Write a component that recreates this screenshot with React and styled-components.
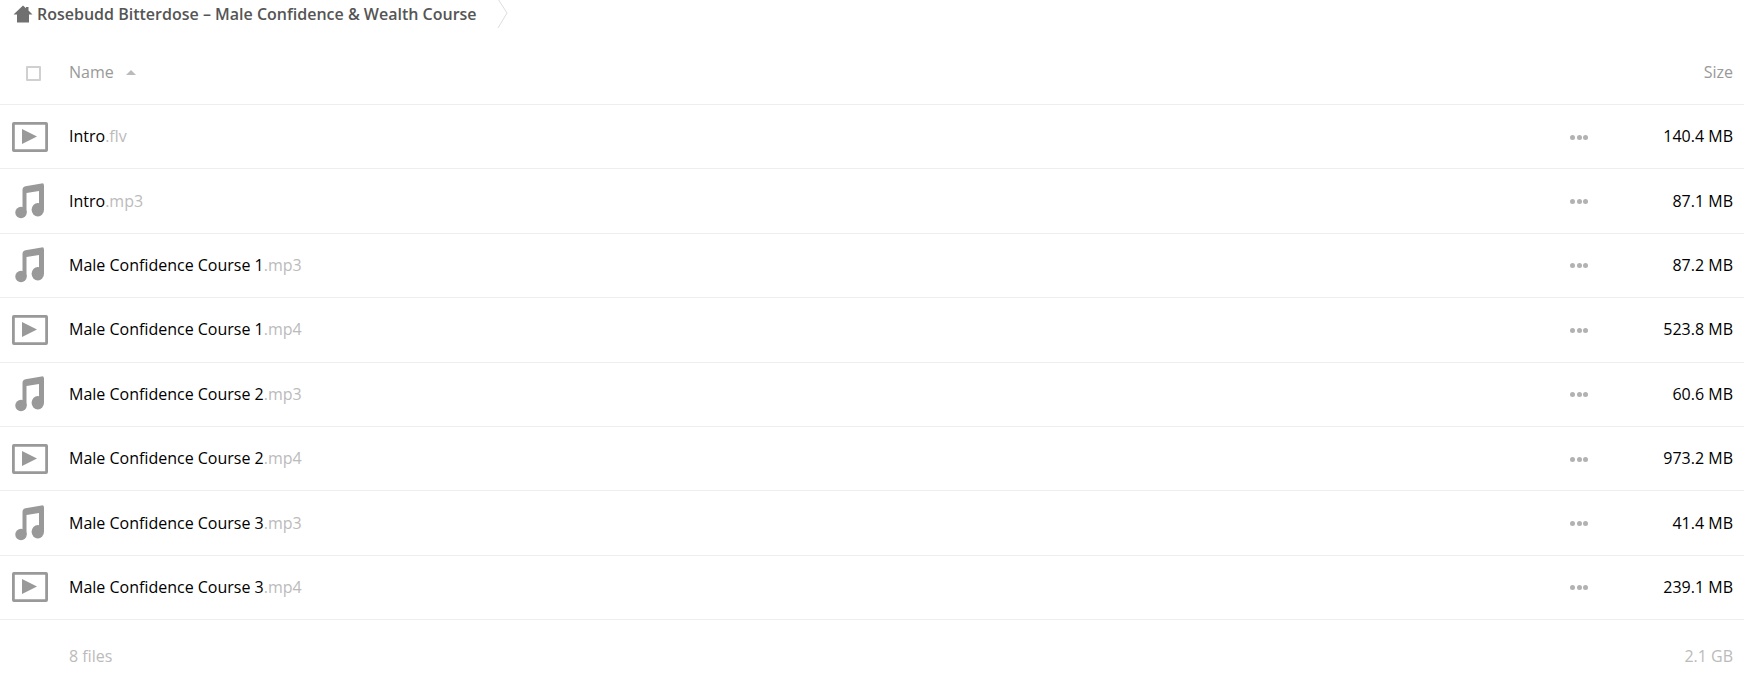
import React from 'react'
import styled, { createGlobalStyle } from 'styled-components'

const GlobalStyle = createGlobalStyle`
  html, body {
    margin: 0;
    padding: 0;
    background: #fff;
    font-family: "Open Sans", "Liberation Sans", sans-serif;
    font-size: 16px;
    color: #000;
    overflow: hidden;
  }
`

const Breadcrumb = styled.div`
  display: flex;
  align-items: center;
  height: 28px;
  padding-left: 13px;
  color: #555;
  font-weight: 600;
  svg { flex: none; }
`

const CrumbName = styled.span`
  margin-left: 4px;
`

const CrumbArrow = styled.svg`
  margin-left: 20px;
  margin-top: -1px;
`

const Row = styled.div`
  display: flex;
  align-items: center;
  height: ${p => p.$height}px;
  box-sizing: border-box;
  border-bottom: ${p => (p.$plain ? 'none' : '1px solid #eee')};
`

const HeadRow = styled(Row)`
  padding-top: 12px;
`

const IconCell = styled.div`
  width: 69px;
  flex: none;
  display: flex;
  padding-left: 12px;
  box-sizing: border-box;
`

const Check = styled.span`
  display: block;
  width: 15px;
  height: 15px;
  box-sizing: border-box;
  margin: 2px 0 0 14px;
  border: 2px solid #d0d0d0;
  border-radius: 1px;
`

const NameCell = styled.div`
  flex: 1;
  min-width: 0;
  white-space: nowrap;
  margin-top: -1px;
`

const HeadLabel = styled.span`
  color: #999;
`

const SortArrow = styled.span`
  display: inline-block;
  margin-left: 12px;
  vertical-align: 3px;
  border-left: 5px solid transparent;
  border-right: 5px solid transparent;
  border-bottom: 5px solid #bbb;
`

const Ext = styled.span`
  color: #bbb;
`

const Dots = styled.div`
  display: flex;
  gap: 1.500px;
  margin-top: 1px;
  margin-right: 55px;
  span {
    width: 5px;
    height: 5px;
    border-radius: 50%;
    background: #b2b2b2;
  }
`

const SizeCell = styled.div`
  width: 90px;
  flex: none;
  text-align: right;
  margin-top: -1px;
  margin-right: 11px;
  white-space: nowrap;
  color: ${p => p.$color || '#000'};
`

const FooterRow = styled(Row)`
  color: #bbb;
  padding-top: 9px;
`

const files = [
  { name: 'Intro', ext: '.flv', size: '140.4 MB', type: 'video' },
  { name: 'Intro', ext: '.mp3', size: '87.1 MB', type: 'audio' },
  { name: 'Male Confidence Course 1', ext: '.mp3', size: '87.2 MB', type: 'audio' },
  { name: 'Male Confidence Course 1', ext: '.mp4', size: '523.8 MB', type: 'video' },
  { name: 'Male Confidence Course 2', ext: '.mp3', size: '60.6 MB', type: 'audio' },
  { name: 'Male Confidence Course 2', ext: '.mp4', size: '973.2 MB', type: 'video' },
  { name: 'Male Confidence Course 3', ext: '.mp3', size: '41.4 MB', type: 'audio' },
  { name: 'Male Confidence Course 3', ext: '.mp4', size: '239.1 MB', type: 'video' },
]

const HomeIcon = () => (
  <svg width="20" height="18" viewBox="0 0 20 18">
    <path d="M0.500 9.500 L10 0.500 L13 3.300 L13 2 L15.500 2 L15.500 5.600 L19.500 9.500 L16 9.500 L16 17.500 L4 17.500 L4 9.500 Z" fill="#707070" />
  </svg>
)

const VideoIcon = () => (
  <svg width="36" height="30" viewBox="0 0 36 30">
    <rect x="1.400" y="1.400" width="33.200" height="27.200" rx="0.500" fill="none" stroke="#999" strokeWidth="2.800" />
    <path d="M10 7 L25 14.500 L10 22 Z" fill="#999" />
  </svg>
)

const AudioIcon = () => (
  <svg width="36" height="36" viewBox="0 0 36 36">
    <g transform="translate(3 0)" fill="#999">
      <path d="M7.500 30 L7.500 7 Q7.500 3.800 10.500 3.300 L26.500 0.400 Q29 0 29 2.500 L29 27 L24 27 L24 8 L11.500 10 L11.500 30 Z" />
      <ellipse cx="6" cy="29.500" rx="5.700" ry="5.800" />
      <ellipse cx="22.800" cy="26.800" rx="6.200" ry="6.800" />
    </g>
  </svg>
)

export default function App() {
  return (
    <>
      <GlobalStyle />
      <Breadcrumb>
        <HomeIcon />
        <CrumbName>Rosebudd Bitterdose – Male Confidence &amp; Wealth Course</CrumbName>
        <CrumbArrow width="12" height="30" viewBox="0 0 12 30">
          <path d="M1 0 L10 14 L1 29" fill="none" stroke="#ddd" />
        </CrumbArrow>
      </Breadcrumb>
      <HeadRow $height={77}>
        <IconCell>
          <Check />
        </IconCell>
        <NameCell>
          <HeadLabel>Name</HeadLabel>
          <SortArrow />
        </NameCell>
        <SizeCell $color="#999">Size</SizeCell>
      </HeadRow>
      {files.map(f => (
        <Row $height={64.4} key={f.name + f.ext}>
          <IconCell>{f.type === 'video' ? <VideoIcon /> : <AudioIcon />}</IconCell>
          <NameCell>
            {f.name}
            <Ext>{f.ext}</Ext>
          </NameCell>
          <Dots>
            <span />
            <span />
            <span />
          </Dots>
          <SizeCell>{f.size}</SizeCell>
        </Row>
      ))}
      <FooterRow $height={64} $plain>
        <IconCell />
        <NameCell>
          <Ext>8 files</Ext>
        </NameCell>
        <SizeCell $color="#bbb">2.1 GB</SizeCell>
      </FooterRow>
    </>
  )
}
